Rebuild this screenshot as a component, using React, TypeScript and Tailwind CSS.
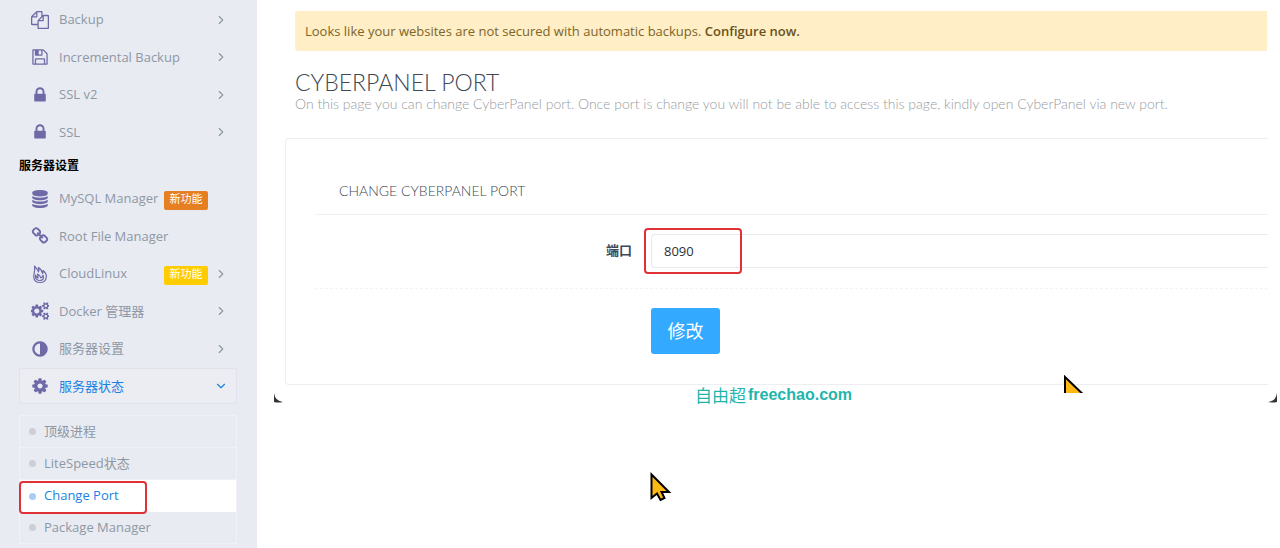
import type { ReactNode } from "react";
import { LuChevronDown, LuChevronRight } from "react-icons/lu";

const iconPaths = {
  copy: "M1696 384q40 0 68 28t28 68v1216q0 40-28 68t-68 28h-960q-40 0-68-28t-28-68v-288h-544q-40 0-68-28t-28-68v-672q0-40 20-88t48-76l408-408q28-28 76-48t88-20h416q40 0 68 28t28 68v328q68-40 128-40h416zm-544 213l-299 299h299v-299zm-640-384l-299 299h299v-299zm196 647l316-316v-416h-384v416q0 40-28 68t-68 28h-416v640h512v-256q0-40 20-88t48-76zm956 804v-1152h-384v416q0 40-28 68t-68 28h-416v640h896z",
  save: "M512 1536h768v-384h-768v384zm896 0h128v-896q0-14-10-38.500t-20-34.500l-281-281q-10-10-34-20t-39-10v416q0 40-28 68t-68 28h-576q-40 0-68-28t-28-68v-416h-128v1280h128v-416q0-40 28-68t68-28h832q40 0 68 28t28 68v416zm-384-928v-320q0-13-9.500-22.500t-22.500-9.500h-192q-13 0-22.500 9.500t-9.500 22.500v320q0 13 9.500 22.500t22.500 9.500h192q13 0 22.500-9.500t9.500-22.500zm640 32v928q0 40-28 68t-68 28h-1344q-40 0-68-28t-28-68v-1344q0-40 28-68t68-28h928q40 0 88 20t76 48l280 280q28 28 48 76t20 88z",
  lock: "M640 768h512v-192q0-106-75-181t-181-75-181 75-75 181v192zm832 96v576q0 40-28 68t-68 28h-960q-40 0-68-28t-28-68v-576q0-40 28-68t68-28h32v-192q0-184 132-316t316-132 316 132 132 316v192h32q40 0 68 28t28 68z",
  database:
    "M896 768q237 0 443-43t325-127v170q0 69-103 128t-280 93.500-385 34.500-385-34.500-280-93.500-103-128v-170q119 84 325 127t443 43zm0 768q237 0 443-43t325-127v170q0 69-103 128t-280 93.500-385 34.500-385-34.500-280-93.500-103-128v-170q119 84 325 127t443 43zm0-384q237 0 443-43t325-127v170q0 69-103 128t-280 93.500-385 34.500-385-34.500-280-93.500-103-128v-170q119 84 325 127t443 43zm0-1152q208 0 385 34.500t280 93.500 103 128v128q0 69-103 128t-280 93.500-385 34.500-385-34.500-280-93.500-103-128v-128q0-69 103-128t280-93.500 385-34.500z",
  link: "M1520 1216q0-40-28-68l-208-208q-28-28-68-28-42 0-72 32 3 3 19 18.500t21.500 21.500 15 19 13 25.500 3.500 27.500q0 40-28 68t-68 28q-15 0-27.500-3.500t-25.500-13-19-15-21.500-21.500-18.500-19q-33 31-33 73 0 40 28 68l206 207q27 27 68 27 40 0 68-26l147-146q28-28 28-67zm-703-705q0-40-28-68l-206-207q-28-28-68-28-39 0-68 27l-147 146q-28 28-28 67 0 40 28 68l208 208q27 27 68 27 42 0 72-31-3-3-19-18.500t-21.500-21.500-15-19-13-25.500-3.500-27.500q0-40 28-68t68-28q15 0 27.500 3.500t25.500 13 19 15 21.500 21.500 18.500 19q33-31 33-73zm895 705q0 120-85 203l-147 146q-83 83-203 83-121 0-204-85l-206-207q-83-83-83-203 0-123 88-209l-88-88q-86 88-208 88-120 0-204-84l-208-208q-84-84-84-204t85-203l147-146q83-83 203-83 121 0 204 85l206 207q83 83 83 203 0 123-88 209l88 88q86-88 208-88 120 0 204 84l208 208q84 84 84 204z",
  cogs: "M832 896q0-106-75-181t-181-75-181 75-75 181 75 181 181 75 181-75 75-181zm768 512q0-52-38-90t-90-38-90 38-38 90q0 53 37.500 90.500t90.500 37.500 90.500-37.500 37.500-90.500zm0-1024q0-52-38-90t-90-38-90 38-38 90q0 53 37.500 90.500t90.500 37.500 90.500-37.500 37.500-90.500zm-384 421v185q0 10-7 19.500t-16 10.500l-155 24q-11 35-32 76 34 48 90 115 7 11 7 20 0 12-7 19-23 30-82.500 89.500t-78.500 59.500q-11 0-21-7l-115-90q-37 19-77 31-11 108-23 155-7 24-30 24h-186q-11 0-20-7.500t-10-17.500l-23-153q-34-10-75-31l-118 89q-7 7-20 7-11 0-21-8-144-133-144-160 0-9 7-19 10-14 41-53t47-61q-23-44-35-82l-152-24q-10-1-17-9.500t-7-19.500v-185q0-10 7-19.500t16-10.500l155-24q11-35 32-76-34-48-90-115-7-11-7-20 0-12 7-20 22-30 82-89t79-59q11 0 21 7l115 90q34-18 77-32 11-108 23-154 7-24 30-24h186q11 0 20 7.500t10 17.500l23 153q34 10 75 31l118-89q8-7 20-7 11 0 21 8 144 133 144 160 0 8-7 19-12 16-42 54t-45 60q23 48 34 82l152 23q10 2 17 10.500t7 19.500zm640 533v140q0 16-149 31-12 27-30 52 51 113 51 138 0 4-4 7-122 71-124 71-8 0-46-47t-52-68q-20 2-30 2t-30-2q-14 21-52 68t-46 47q-2 0-124-71-4-3-4-7 0-25 51-138-18-25-30-52-149-15-149-31v-140q0-16 149-31 13-29 30-52-51-113-51-138 0-4 4-7 4-2 35-20t59-34 30-16q8 0 46 46.500t52 67.500q20-2 30-2t30 2q51-71 92-112l6-2q4 0 124 70 4 3 4 7 0 25-51 138 17 23 30 52 149 15 149 31zm0-1024v140q0 16-149 31-12 27-30 52 51 113 51 138 0 4-4 7-122 71-124 71-8 0-46-47t-52-68q-20 2-30 2t-30-2q-14 21-52 68t-46 47q-2 0-124-71-4-3-4-7 0-25 51-138-18-25-30-52-149-15-149-31v-140q0-16 149-31 13-29 30-52-51-113-51-138 0-4 4-7 4-2 35-20t59-34 30-16q8 0 46 46.500t52 67.500q20-2 30-2t30 2q51-71 92-112l6-2q4 0 124 70 4 3 4 7 0 25-51 138 17 23 30 52 149 15 149 31z",
  adjust:
    "M896 1440v-1088q-148 0-273 73t-198 198-73 273 73 273 198 198 273 73zm768-544q0 209-103 385.500t-279.500 279.500-385.500 103-385.500-103-279.500-279.500-103-385.500 103-385.500 279.500-279.500 385.500-103 385.500 103 279.500 279.500 103 385.500z",
  cog: "M1152 896q0-106-75-181t-181-75-181 75-75 181 75 181 181 75 181-75 75-181zm512-109v222q0 12-8 23t-20 13l-185 28q-19 54-39 91 35 50 107 138 10 12 10 25t-9 23q-27 37-99 108t-94 71q-12 0-26-9l-138-108q-44 23-91 38-16 136-29 186-7 28-36 28h-222q-14 0-24.500-8.500t-11.500-21.500l-28-184q-49-16-90-37l-141 107q-10 9-25 9-14 0-25-11-126-114-165-168-7-10-7-23 0-12 8-23 15-21 51-66.500t54-70.500q-27-50-41-99l-183-27q-13-2-21-12.500t-8-23.500v-222q0-12 8-23t19-13l186-28q14-46 39-92-40-57-107-138-10-12-10-24 0-10 9-23 26-36 98.500-107.500t94.500-71.500q13 0 26 10l138 107q44-23 91-38 16-136 29-186 7-28 36-28h222q14 0 24.500 8.500t11.500 21.500l28 184q49 16 90 37l142-107q9-9 24-9 13 0 25 10 129 119 165 170 7 8 7 22 0 12-8 23-15 21-51 66.500t-54 70.500q26 50 41 98l183 28q13 2 21 12.500t8 23.500z",
};

type IconName = keyof typeof iconPaths | "fire";

type MenuEntry = {
  label: string;
  icon: IconName;
  arrow?: "right" | "down";
  badge?: string;
  active?: boolean;
};

const topMenu: MenuEntry[] = [
  { label: "Backup", icon: "copy", arrow: "right" },
  { label: "Incremental Backup", icon: "save", arrow: "right" },
  { label: "SSL v2", icon: "lock", arrow: "right" },
  { label: "SSL", icon: "lock", arrow: "right" },
];

const serverMenu: MenuEntry[] = [
  { label: "MySQL Manager", icon: "database", badge: "bg-[#e67e22]" },
  { label: "Root File Manager", icon: "link" },
  { label: "CloudLinux", icon: "fire", badge: "bg-[#fc0]", arrow: "right" },
  { label: "Docker 管理器", icon: "cogs", arrow: "right" },
  { label: "服务器设置", icon: "adjust", arrow: "right" },
  { label: "服务器状态", icon: "cog", arrow: "down", active: true },
];

const subMenu = [
  { label: "顶级进程" },
  { label: "LiteSpeed状态" },
  { label: "Change Port", active: true },
  { label: "Package Manager" },
];

const Icon = ({ name }: { name: IconName }) => {
  if (name === "fire") {
    return (
      <svg
        viewBox="0 0 20 20"
        className="size-5"
        fill="none"
        stroke="currentColor"
        strokeWidth="1.2"
        strokeLinejoin="round"
      >
        <path d="M4.500 2C5.500 4 8 5 8.500 8C9.500 6.500 9 5 8.500 3.500C11 5 12 6.500 12.500 9.500C13.300 8.500 13.300 7.500 13 6.500C15.500 8.500 16.500 10.500 16.300 13C16 16.500 13.500 18.500 10 18.500C6.500 18.500 4 16.500 3.800 13C3.700 9.500 5.500 6.500 4.500 2Z" />
        <path d="M5.500 11C6 12.500 7 13 8 14C8.300 12.500 8 11.500 7.500 10C9.500 11 10.500 12.500 10.800 14C12 13.500 12.800 12.500 13 11.200C14.500 14 13 16.500 10 16.500C7 16.500 5 14.500 5.500 11Z" />
      </svg>
    );
  }
  return (
    <svg viewBox="0 0 1792 1792" className="size-[18px]" fill="currentColor">
      <path d={iconPaths[name]} />
    </svg>
  );
};

const Badge = ({ color }: { color: string }) => (
  <span
    className={`flex justify-center ml-auto mt-[3px] w-11 h-[19px] rounded-xs text-[11px] leading-4 text-white ${color}`}
  >
    新功能
  </span>
);

const MenuItem = ({ label, icon, arrow, badge, active }: MenuEntry) => (
  <li className="flex items-center">
    <a
      href="#"
      className={
        active
          ? "flex flex-1 items-center h-9 rounded-xs border border-[#dfe2ec] bg-[#ebedf3] text-[#1c82e1]"
          : "flex flex-1 items-center h-9 border border-transparent text-[#8d98a5]"
      }
    >
      <span className="flex justify-center w-[39px] text-[#6f69a8]">
        <Icon name={icon} />
      </span>
      <span>{label}</span>
      {badge && <Badge color={badge} />}
      <span className={badge ? "w-7 pl-[6px]" : "ml-auto w-7 pl-[6px]"}>
        {arrow === "right" && <LuChevronRight className="size-[14px]" />}
        {arrow === "down" && <LuChevronDown className="size-[14px]" />}
      </span>
    </a>
  </li>
);

const Sidebar = () => (
  <nav className="w-[257px] shrink-0 bg-[#e9ebf2] pt-px pl-[19px] pr-5 text-[13px]">
    <ul className="grid auto-rows-fr h-[150px]">
      {topMenu.map((item) => (
        <MenuItem key={item.label} {...item} />
      ))}
    </ul>
    <h2 className="h-[29px] pt-[3px] text-[12px] leading-6 font-bold text-black">服务器设置</h2>
    <ul className="grid auto-rows-fr h-[225px]">
      {serverMenu.map((item) => (
        <MenuItem key={item.label} {...item} />
      ))}
    </ul>
    <ul className="mt-[10px] border-x border-t border-[#f0f1f6]">
      {subMenu.map((item) => (
        <li key={item.label} className="relative">
          <a
            href="#"
            className={
              item.active
                ? "flex items-center h-8 gap-2 pl-[9px] bg-white text-[#1c82e1]"
                : "flex items-center h-8 gap-2 pl-[9px] border-b border-[#f0f1f6] text-[#8d98a5]"
            }
          >
            <span
              className={
                item.active
                  ? "size-[7px] rounded-full bg-[#a9cdf2]"
                  : "size-[7px] rounded-full bg-[#cdced6]"
              }
            />
            {item.label}
          </a>
          {item.active && (
            <span className="absolute -left-px top-px w-32 h-[33px] rounded border-2 border-[#e03236]" />
          )}
        </li>
      ))}
    </ul>
  </nav>
);

const Cursor = ({ children }: { children: ReactNode }) => (
  <svg
    viewBox="0 0 22 30"
    className="w-[22px] h-[30px]"
    fill="#fdb813"
    stroke="#000"
    strokeWidth="2"
  >
    {children}
  </svg>
);

const App = () => (
  <div className="flex h-screen overflow-hidden bg-white font-['Open_Sans','Noto_Sans_CJK_SC',sans-serif]">
    <Sidebar />
    <main className="relative flex-1 pt-[11px]">
      <div className="ml-[38px] mr-[13px] h-10 pl-[10px] rounded-l bg-[#ffeec6] text-[13px] leading-10 text-[#7d6528]">
        Looks like your websites are not secured with automatic backups.{" "}
        <a href="#" className="font-semibold text-[#6b521a]">
          Configure now.
        </a>
      </div>

      <div className="ml-[38px] pt-[17px] font-['Lato',sans-serif] font-light">
        <h1 className="text-[23px] leading-7 text-[#3e4855]">CYBERPANEL PORT</h1>
        <p className="text-[14px] leading-4 text-[#979b9f] whitespace-nowrap">
          On this page you can change CyberPanel port. Once port is change you will not be able to
          access this page, kindly open CyberPanel via new port.
        </p>
      </div>

      <form className="ml-7 mr-3 mt-[26px] h-[247px] rounded-l border-y border-l border-[#eceef0] pt-10 pl-[29px]">
        <h3 className="h-9 pl-6 border-b border-[#f0f1f3] font-['Lato',sans-serif] text-[14px] leading-6 font-light text-[#3e4855]">
          CHANGE CYBERPANEL PORT
        </h3>
        <div className="flex h-[74px] pt-[19px] border-b border-dashed border-[#f2f4f6]">
          <label
            htmlFor="port"
            className="w-[317px] text-right text-[13px] leading-8 font-bold text-[#3e4855]"
          >
            端口
          </label>
          <div className="relative flex-1 ml-[19px]">
            <input
              id="port"
              defaultValue="8090"
              className="block w-full h-[34px] px-3 rounded-l-sm border-y border-l border-[#e6e9ed] text-[13px] text-[#2b2f33] outline-none"
            />
            <span className="absolute -left-[7px] -top-[6px] w-[98px] h-[46px] rounded border-2 border-[#e03236]" />
          </div>
        </div>
        <button
          type="button"
          className="block ml-[336px] mt-[19px] w-[69px] h-[46px] rounded-[3px] bg-[#33aaff] text-[18px] text-white"
        >
          修改
        </button>
      </form>

      <p className="absolute left-[438px] top-[383px] flex items-center gap-0.5 leading-6 text-[#1fb5ad]">
        <span className="font-['Noto_Sans_CJK_SC',sans-serif] text-[17px]">自由超</span>
        <span className="font-['Liberation_Sans',sans-serif] text-[16px] font-bold">
          freechao.com
        </span>
      </p>

      {/* rounded bottom corners of the capture frame */}
      <svg viewBox="0 0 9 10" className="absolute left-[17px] top-[393px] w-[9px] h-[10px]">
        <path d="M0 0Q1 8 9 9Q4 10 0 9Z" fill="#333" />
      </svg>
      <svg viewBox="0 0 9 10" className="absolute right-[3px] top-[393px] w-[9px] h-[10px]">
        <path d="M9 0Q8 8 0 9Q4 10 9 9Z" fill="#333" />
      </svg>

      <div className="absolute left-[807px] top-[375px] h-[18px] overflow-hidden">
        <Cursor>
          <path d="M1 2V34L26 26Z" />
        </Cursor>
      </div>
      <div className="absolute left-[393px] top-[472px]">
        <Cursor>
          <path d="M1.500 2.500V26L7 21.500L10.500 28L14.500 26L11.500 20H19Z" />
        </Cursor>
      </div>
    </main>
  </div>
);

export default App;
